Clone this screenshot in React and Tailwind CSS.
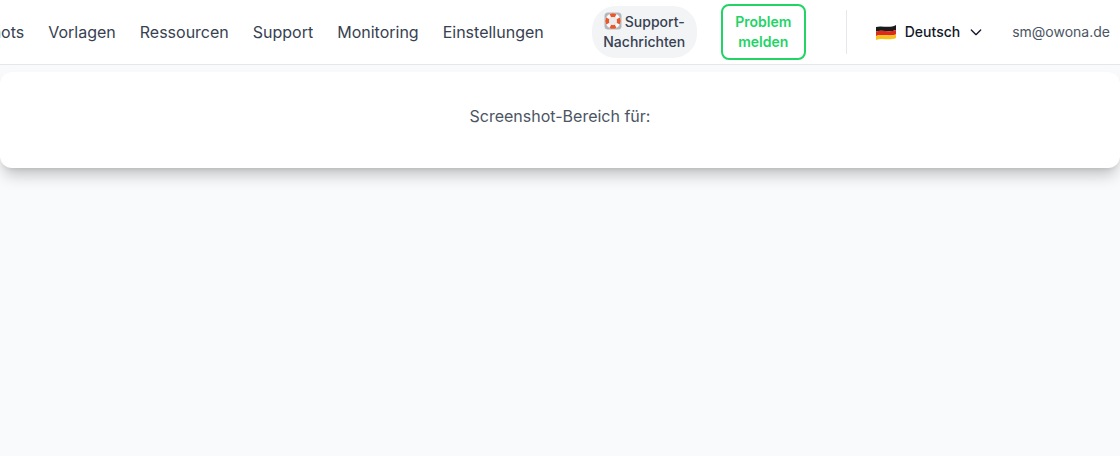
import React from "react";

function LifeBuoy() {
  return (
    <svg width="18" height="18" viewBox="0 0 18 18" className="mr-[3px] inline-block align-[-3px]">
      <rect x="0.5" y="0.5" width="17" height="17" rx="3.5" fill="#b4b8bd" />
      <circle cx="9" cy="9" r="5.8" fill="none" stroke="#fafafa" strokeWidth="3.8" />
      <g fill="none" stroke="#e8582c" strokeWidth="3.8">
        <path d="M6.4 3.8 A5.8 5.8 0 0 1 11.6 3.8" />
        <path d="M14.2 6.4 A5.8 5.8 0 0 1 14.2 11.6" />
        <path d="M11.6 14.2 A5.8 5.8 0 0 1 6.4 14.2" />
        <path d="M3.8 11.6 A5.8 5.8 0 0 1 3.8 6.4" />
      </g>
      <circle cx="9" cy="9" r="3.9" fill="#e9ebee" />
    </svg>
  );
}

function Flag() {
  return (
    <svg width="20" height="16" viewBox="0 0 20 16">
      <path d="M0 3 C6 1 13 5 20 1 V6 C13 9 6 5 0 7.5 Z" fill="#1b1b1b" />
      <path d="M0 7.5 C6 5 13 9 20 6 V10.5 C13 13 6 9.5 0 12 Z" fill="#dd2a1b" />
      <path d="M0 12 C6 9.5 13 13 20 10.5 V14 C13 17 6 13.5 0 16 Z" fill="#f6c21c" />
    </svg>
  );
}

function Chevron() {
  return (
    <svg width="16" height="16" viewBox="0 0 24 24" fill="none" stroke="#111827" strokeWidth="2" strokeLinecap="round" strokeLinejoin="round">
      <path d="m5 9 7 7 7-7" />
    </svg>
  );
}

export default function App() {
  const font = { fontFamily: "Inter, sans-serif" };
  return (
    <div style={font} className="h-[456px] w-[1120px] overflow-hidden bg-[#f9fafb]">
      <header className="flex h-[65px] items-center justify-end overflow-hidden border-b border-[#e5e7eb] bg-white">
        <nav className="flex shrink-0 items-center gap-6 text-base text-[#374151]">
          <span>Screenshots</span>
          <span>Vorlagen</span>
          <span>Ressourcen</span>
          <span>Support</span>
          <span>Monitoring</span>
          <span>Einstellungen</span>
        </nav>
        <div className="ml-12 w-[105px] shrink-0 rounded-3xl bg-[#f3f4f6] py-1.5 text-center text-sm leading-5 font-medium text-[#374151]">
          <LifeBuoy />Support-
          <br />
          Nachrichten
        </div>
        <div className="ml-6 w-[85px] shrink-0 rounded-lg border-2 border-[#22d366] py-1.5 text-center text-sm leading-5 font-semibold text-[#22d366]">
          Problem
          <br />
          melden
        </div>
        <div className="ml-10 h-11 w-px shrink-0 bg-[#e5e7eb]" />
        <div className="ml-[29px] flex shrink-0 items-center text-sm font-medium text-[#111827]">
          <Flag />
          <span className="ml-[9px]">Deutsch</span>
          <span className="ml-2"><Chevron /></span>
        </div>
        <div className="mr-2.5 ml-7 shrink-0 text-sm text-[#4b5563]">sm@owona.de</div>
      </header>
      <main className="pt-[7px]">
        <div className="h-24 rounded-xl bg-white pt-8 text-center text-base text-[#4b5563] shadow-[0_10px_15px_-3px_rgba(0,0,0,0.22),0_4px_6px_-4px_rgba(0,0,0,0.14)]">
          Screenshot-Bereich für:
        </div>
      </main>
    </div>
  );
}
